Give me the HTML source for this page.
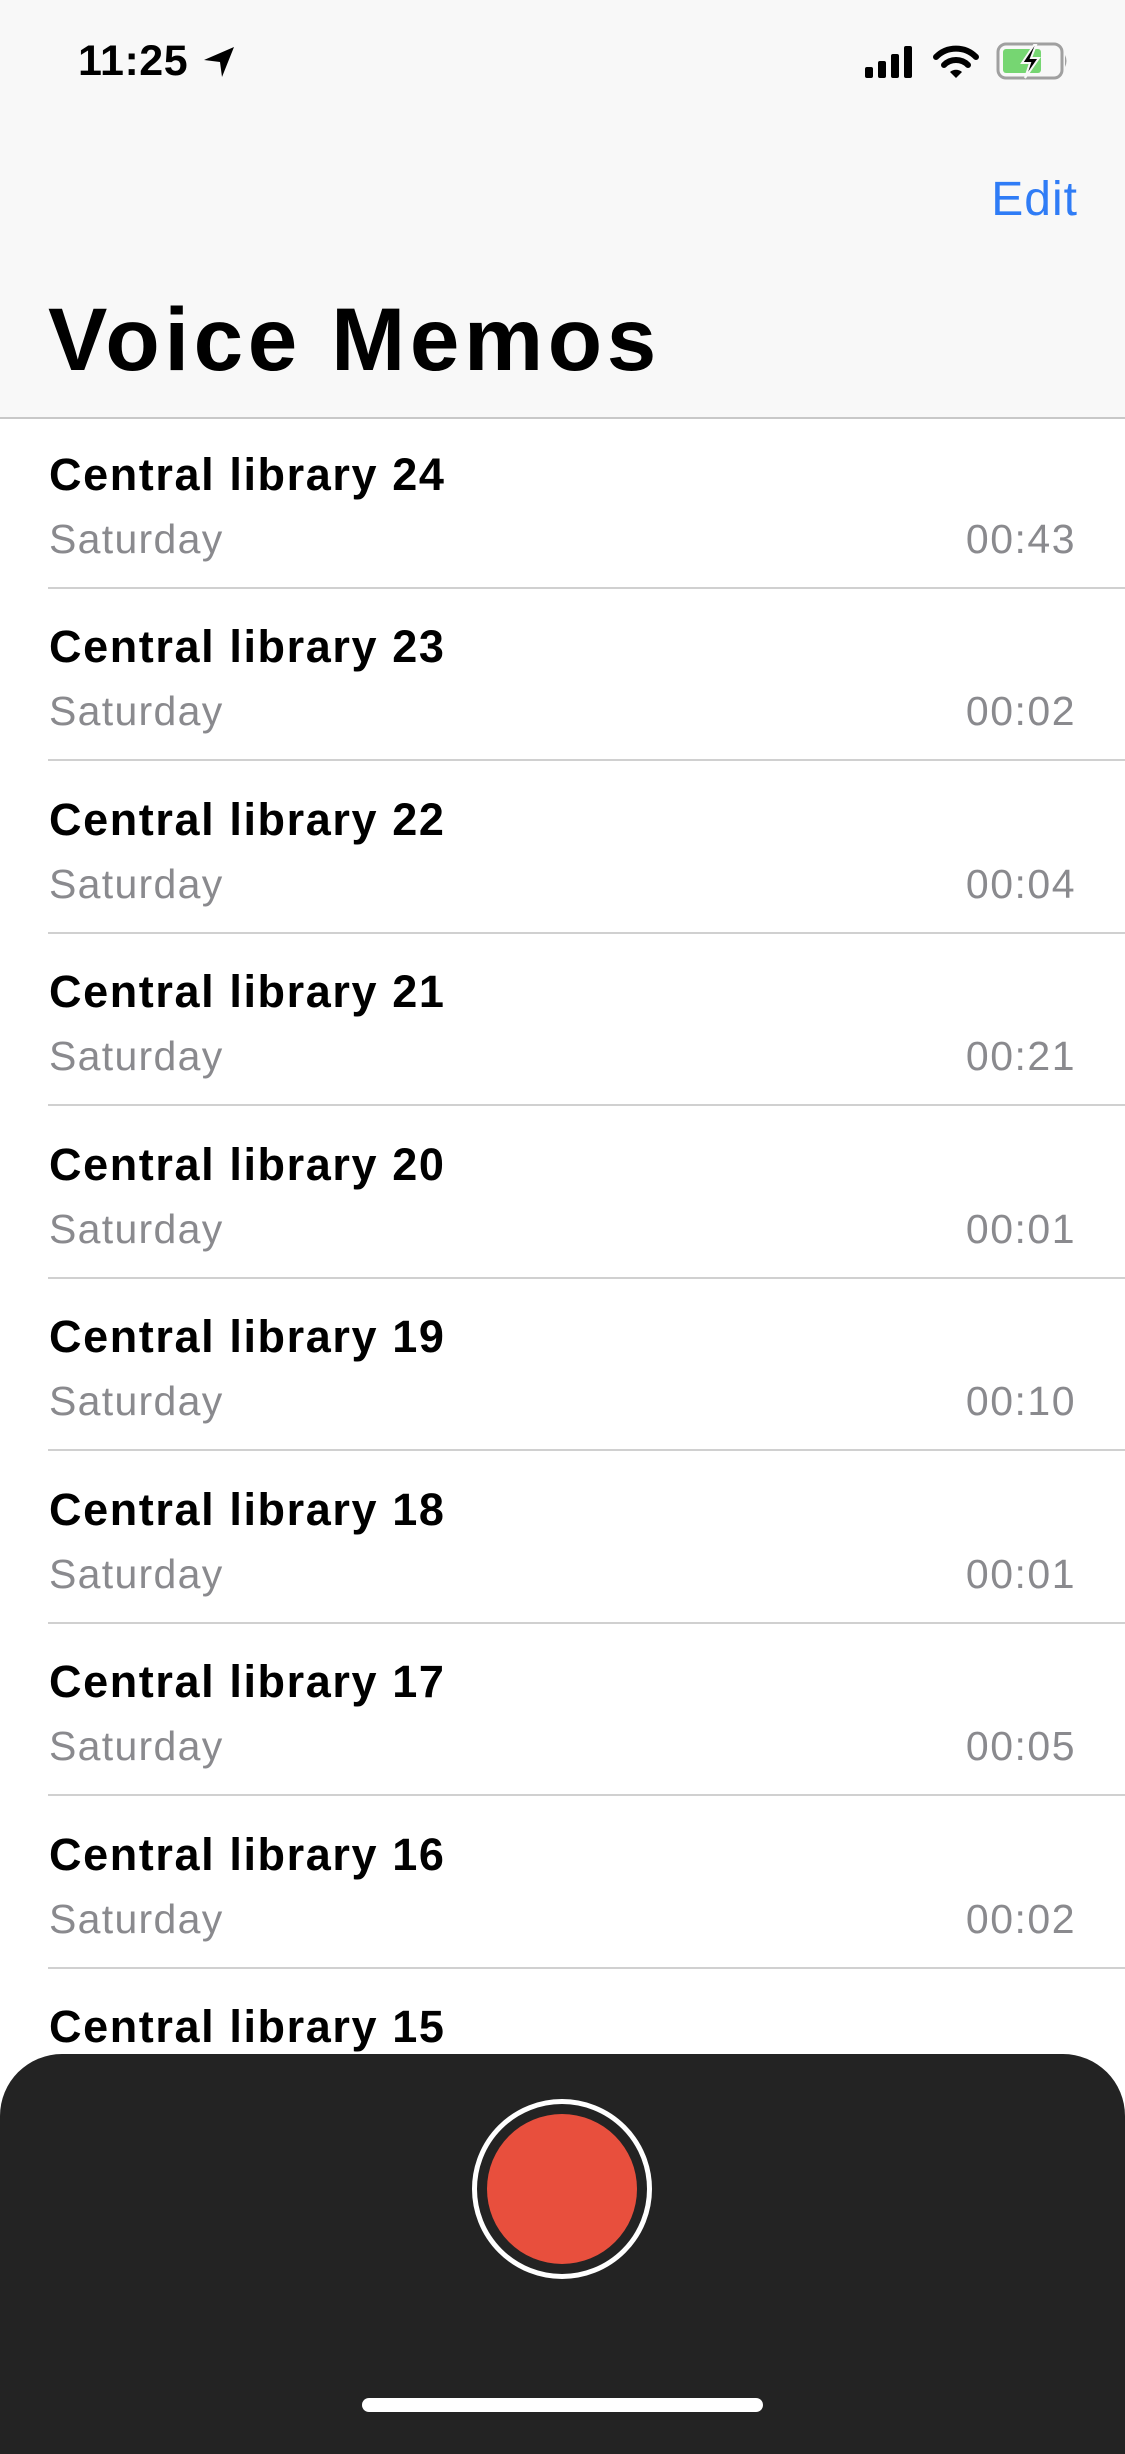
<!DOCTYPE html>
<html><head><meta charset="utf-8"><style>
*{margin:0;padding:0;box-sizing:border-box}
body{width:1125px;height:2436px;background:#fff;font-family:"Liberation Sans",sans-serif;position:relative;overflow:hidden}
.hdr{position:absolute;left:0;top:0;width:1125px;height:419px;background:#f8f8f8;border-bottom:2px solid #c8c8c8}
.abs{position:absolute;white-space:nowrap}
.t{font-size:45px;font-weight:bold;color:#000;left:49px;line-height:1;letter-spacing:1.6px}
.s{font-size:41px;color:#8a8a8e;left:49px;line-height:1;letter-spacing:1.3px}
.d{font-size:41px;color:#8a8a8e;right:49px;line-height:1;letter-spacing:1.5px}
.sep{position:absolute;left:48px;right:0;height:2px;background:#d0d0d0}
</style></head><body>
<div class="hdr"></div>
<div class="abs" style="left:78px;top:37px;font-size:43px;font-weight:bold;letter-spacing:0.5px">11:25</div>
<svg class="abs" style="left:202px;top:45px" width="34" height="34" viewBox="0 0 34 34"><path d="M2 15 L32 2 L20 32 L18 17 Z" fill="#000"/></svg>
<svg class="abs" style="left:865px;top:45px" width="52" height="34"><rect x="0" y="22" width="8" height="11" rx="2"/><rect x="13" y="16" width="8" height="17" rx="2"/><rect x="26" y="9" width="8" height="24" rx="2"/><rect x="39" y="1" width="8" height="32" rx="2"/></svg>
<svg class="abs" style="left:933px;top:44px" width="46" height="36" viewBox="0 0 46 36"><path d="M3 13 A28 28 0 0 1 43 13" stroke="#000" stroke-width="6" fill="none" stroke-linecap="round"/><path d="M11 21 A17 17 0 0 1 35 21" stroke="#000" stroke-width="6" fill="none" stroke-linecap="round"/><path d="M17 28 L23 34 L29 28 A9 9 0 0 0 17 28Z" fill="#000"/></svg>
<svg class="abs" style="left:996px;top:42px" width="72" height="38" viewBox="0 0 72 38"><rect x="2" y="2" width="64" height="34" rx="8" fill="none" stroke="#a0a0a0" stroke-width="3"/><rect x="7" y="7" width="38" height="24" rx="3" fill="#76d672"/><path d="M69 13 Q72 19 69 25Z" fill="#a0a0a0"/><path d="M38 3 L26 21 L34 21 L29 36 L43 16 L35 16 L40 3Z" fill="#000" stroke="#f8f8f8" stroke-width="2"/></svg>
<div class="abs" style="right:47px;top:172px;font-size:48px;color:#2f7cf6;letter-spacing:1px">Edit</div>
<div class="abs" style="left:48px;top:288px;font-size:89px;font-weight:bold;letter-spacing:4.6px">Voice Memos</div>

<div class="abs t" style="top:452px">Central library 24</div><div class="abs s" style="top:519px">Saturday</div><div class="abs d" style="top:519px">00:43</div><div class="sep" style="top:587px"></div>
<div class="abs t" style="top:624px">Central library 23</div><div class="abs s" style="top:691px">Saturday</div><div class="abs d" style="top:691px">00:02</div><div class="sep" style="top:759px"></div>
<div class="abs t" style="top:797px">Central library 22</div><div class="abs s" style="top:864px">Saturday</div><div class="abs d" style="top:864px">00:04</div><div class="sep" style="top:932px"></div>
<div class="abs t" style="top:969px">Central library 21</div><div class="abs s" style="top:1036px">Saturday</div><div class="abs d" style="top:1036px">00:21</div><div class="sep" style="top:1104px"></div>
<div class="abs t" style="top:1142px">Central library 20</div><div class="abs s" style="top:1209px">Saturday</div><div class="abs d" style="top:1209px">00:01</div><div class="sep" style="top:1277px"></div>
<div class="abs t" style="top:1314px">Central library 19</div><div class="abs s" style="top:1381px">Saturday</div><div class="abs d" style="top:1381px">00:10</div><div class="sep" style="top:1449px"></div>
<div class="abs t" style="top:1487px">Central library 18</div><div class="abs s" style="top:1554px">Saturday</div><div class="abs d" style="top:1554px">00:01</div><div class="sep" style="top:1622px"></div>
<div class="abs t" style="top:1659px">Central library 17</div><div class="abs s" style="top:1726px">Saturday</div><div class="abs d" style="top:1726px">00:05</div><div class="sep" style="top:1794px"></div>
<div class="abs t" style="top:1832px">Central library 16</div><div class="abs s" style="top:1899px">Saturday</div><div class="abs d" style="top:1899px">00:02</div><div class="sep" style="top:1967px"></div>
<div class="abs t" style="top:2004px">Central library 15</div>

<div class="abs" style="left:0;top:2054px;width:1125px;height:400px;background:#232323;border-radius:62px 62px 0 0"></div>
<div class="abs" style="left:472px;top:2099px;width:180px;height:180px;border-radius:50%;border:5px solid #fff"></div>
<div class="abs" style="left:487px;top:2114px;width:150px;height:150px;border-radius:50%;background:#e84f3d"></div>
<div class="abs" style="left:362px;top:2398px;width:401px;height:14px;border-radius:7px;background:#fff"></div>
</body></html>
